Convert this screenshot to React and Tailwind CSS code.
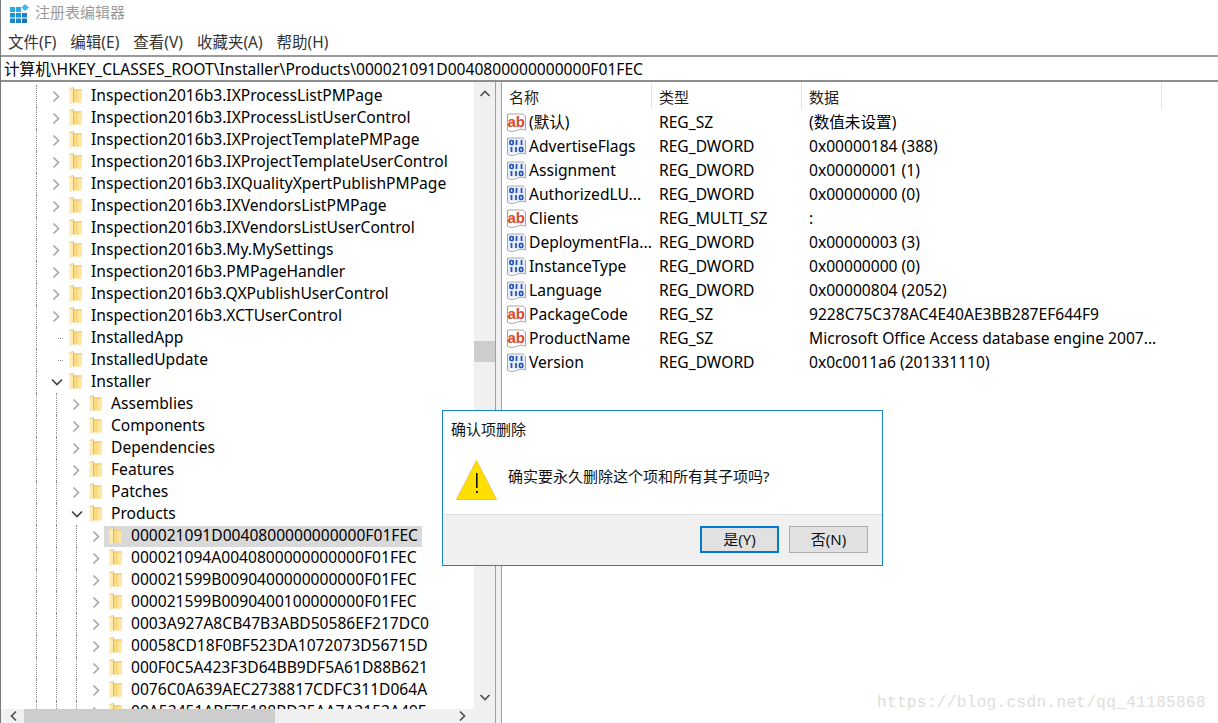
import React from "react";

function Folder() {
  return (
    <svg width="13" height="18" viewBox="0 0 13 18" className="shrink-0">
      <path d="M4 2.5 H12.5 V15.5 H4 Z" fill="#fbd97e" />
      <path d="M9 2.5 H12.5 V15.5 H9 Z" fill="#fde6a0" />
      <path d="M4 2.5 H12.5 V3.5 H4 Z" fill="#eec35f" />
      <path d="M0.5 1.5 L4 0.5 V15.5 L0.5 17.5 Z" fill="#fdeab2" />
      <path d="M4 0.5 H5 V15.5 H4 Z" fill="#e6ba52" />
      <path d="M0.5 1.5 L4 0.5" stroke="#e6ba52" strokeWidth="0.7" fill="none" />
    </svg>
  );
}

function ChevR() {
  return (
    <svg width="9" height="13" viewBox="0 0 9 13" className="shrink-0">
      <path d="M1.5 1.5 L6.5 6.5 L1.5 11.5" fill="none" stroke="#a6a6a6" strokeWidth="1.6" />
    </svg>
  );
}
function ChevD() {
  return (
    <svg width="12" height="9" viewBox="0 0 12 9" className="shrink-0">
      <path d="M1 1.5 L6 6.5 L11 1.5" fill="none" stroke="#404040" strokeWidth="1.6" />
    </svg>
  );
}

function Guide() {
  return <div className="w-5 h-full shrink-0 border-l border-dotted border-[#8a8a8a]" />;
}

function TreeRow({ depth, kind, text, selected }) {
  return (
    <div className="flex items-center h-[22px] pl-[35px] shrink-0 whitespace-nowrap">
      <Guide />
      {depth > 0 && <Guide />}
      {depth > 1 && <Guide />}
      <div className="w-[13px] h-full shrink-0 relative flex items-center">
        <div className="flex items-center justify-center w-[13px] h-full -ml-[6px]">
          {kind === "r" && <ChevR />}
          {kind === "d" && <ChevD />}
          {kind === "n" && <div className="w-[8px] ml-[8px] border-t border-dotted border-[#8a8a8a]" />}
        </div>
      </div>
      <div className={selected ? "flex items-center h-[21px] bg-[#d9d9d9] -ml-[5px] pl-[5px] pr-1" : "flex items-center h-[22px]"}>
        <Folder />
        <span className="ml-[9px] text-[15.6px] text-[#000]">{text}</span>
      </div>
    </div>
  );
}

const tree = [
  [0, "r", "Inspection2016b3.IXProcessListPMPage"],
  [0, "r", "Inspection2016b3.IXProcessListUserControl"],
  [0, "r", "Inspection2016b3.IXProjectTemplatePMPage"],
  [0, "r", "Inspection2016b3.IXProjectTemplateUserControl"],
  [0, "r", "Inspection2016b3.IXQualityXpertPublishPMPage"],
  [0, "r", "Inspection2016b3.IXVendorsListPMPage"],
  [0, "r", "Inspection2016b3.IXVendorsListUserControl"],
  [0, "r", "Inspection2016b3.My.MySettings"],
  [0, "r", "Inspection2016b3.PMPageHandler"],
  [0, "r", "Inspection2016b3.QXPublishUserControl"],
  [0, "r", "Inspection2016b3.XCTUserControl"],
  [0, "n", "InstalledApp"],
  [0, "n", "InstalledUpdate"],
  [0, "d", "Installer"],
  [1, "r", "Assemblies"],
  [1, "r", "Components"],
  [1, "r", "Dependencies"],
  [1, "r", "Features"],
  [1, "r", "Patches"],
  [1, "d", "Products"],
  [2, "r", "000021091D0040800000000000F01FEC", true],
  [2, "r", "000021094A0040800000000000F01FEC"],
  [2, "r", "000021599B0090400000000000F01FEC"],
  [2, "r", "000021599B0090400100000000F01FEC"],
  [2, "r", "0003A927A8CB47B3ABD50586EF217DC0"],
  [2, "r", "00058CD18F0BF523DA1072073D56715D"],
  [2, "r", "000F0C5A423F3D64BB9DF5A61D88B621"],
  [2, "r", "0076C0A639AEC2738817CDFC311D064A"],
  [2, "r", "00A53451ABF75188BD35AA7A3153A49E"],
];

const vals = [
  ["s", "(默认)", "REG_SZ", "(数值未设置)"],
  ["b", "AdvertiseFlags", "REG_DWORD", "0x00000184 (388)"],
  ["b", "Assignment", "REG_DWORD", "0x00000001 (1)"],
  ["b", "AuthorizedLU...", "REG_DWORD", "0x00000000 (0)"],
  ["s", "Clients", "REG_MULTI_SZ", ":"],
  ["b", "DeploymentFla...", "REG_DWORD", "0x00000003 (3)"],
  ["b", "InstanceType", "REG_DWORD", "0x00000000 (0)"],
  ["b", "Language", "REG_DWORD", "0x00000804 (2052)"],
  ["s", "PackageCode", "REG_SZ", "9228C75C378AC4E40AE3BB287EF644F9"],
  ["s", "ProductName", "REG_SZ", "Microsoft Office Access database engine 2007..."],
  ["b", "Version", "REG_DWORD", "0x0c0011a6 (201331110)"],
];

function Page({ children }) {
  return (
    <svg width="21" height="20" viewBox="0 0 21 20" className="shrink-0">
      <path d="M1.5 1 H17 L19.5 3 V17 Q15 15 10.5 17.5 Q6 19.5 1.5 17.5 Z" fill="#fff" stroke="#a8a8a8" />
      {children}
    </svg>
  );
}

function IconS() {
  return (
    <Page>
      <text x="10.3" y="13.5" textAnchor="middle" fontSize="15" fontWeight="700" fontFamily="Liberation Sans, sans-serif" fill="#d8492a">ab</text>
    </Page>
  );
}
function IconB() {
  return (
    <Page>
      <rect x="2" y="2" width="17" height="14" fill="#e4ecf9" />
      <g fill="none" stroke="#2450b4" strokeWidth="1.7">
        <rect x="4" y="3.5" width="3.2" height="4" rx="1.2" />
        <path d="M10.5 3 V8 M15.5 3 V8" />
        <path d="M5.5 10 V15 M10 10 V15" />
        <rect x="13.5" y="10.5" width="3.2" height="4" rx="1.2" />
      </g>
    </Page>
  );
}

function Triangle() {
  return (
    <svg width="42" height="42" viewBox="0 0 42 42" className="shrink-0">
      <path d="M20.5 1.5 L40.5 40.5 H0.5 Z" fill="#fedf00" stroke="#f5c242" strokeWidth="1" strokeLinejoin="round" />
      <rect x="20" y="14" width="1.6" height="15" fill="#111" />
      <rect x="20" y="32" width="1.8" height="2" fill="#111" />
    </svg>
  );
}

function Logo() {
  return (
    <svg width="19" height="19" viewBox="0 0 19 19" className="shrink-0">
      <rect x="0" y="3" width="5" height="5" fill="#29abe2" />
      <rect x="6" y="3" width="5" height="5" fill="#29abe2" />
      <rect x="0" y="9" width="5" height="4.5" fill="#1c93d6" />
      <rect x="6" y="9" width="5" height="4.5" fill="#1c93d6" />
      <rect x="12" y="9" width="5" height="4.5" fill="#1e7fc8" />
      <rect x="0" y="14.5" width="5" height="4.5" fill="#1785c8" />
      <rect x="6" y="14.5" width="5" height="4.5" fill="#1785c8" />
      <rect x="12" y="14.5" width="5" height="4.5" fill="#1475bd" />
      <path d="M15 0 L19 3.5 L15 7 L11.5 3.5 Z" fill="#49b6e8" />
    </svg>
  );
}

function Arrow({ d }) {
  return (
    <svg width="12" height="12" viewBox="0 0 12 12" className="shrink-0">
      <path d={d} fill="none" stroke="#505050" strokeWidth="1.7" />
    </svg>
  );
}

export default function App() {
  return (
    <div
      className="relative w-[1218px] h-[723px] overflow-hidden bg-white flex flex-col text-[15.6px] text-black border-l border-[#7a7a7a]"
      style={{ fontFamily: '"Noto Sans", "Noto Sans CJK SC", sans-serif' }}
    >
      <div className="h-[27px] shrink-0 flex items-center pl-[9px] gap-[6px]">
        <Logo />
        <span className="text-[15px] text-[#9a9a9a] -mt-[3px]">注册表编辑器</span>
      </div>
      <div className="h-7 shrink-0 flex items-center pl-[7px] pt-[3px] gap-[14px] text-[15.5px] text-[#333]">
        <span>文件(F)</span>
        <span>编辑(E)</span>
        <span>查看(V)</span>
        <span>收藏夹(A)</span>
        <span>帮助(H)</span>
      </div>
      <div className="h-[27px] shrink-0 flex items-center pl-[3px] pt-[2px] border-y-2 border-[#9a9a9a] border-b-[#8e8e8e] text-[15.6px] bg-white">
        计算机\HKEY_CLASSES_ROOT\Installer\Products\000021091D0040800000000000F01FEC
      </div>
      <div className="flex-1 flex min-h-0">
        <div className="w-[494px] shrink-0 flex flex-col">
          <div className="flex-1 flex min-h-0">
            <div className="w-[473px] shrink-0 overflow-hidden flex flex-col pt-[3px]">
              {tree.map((r, i) => (
                <TreeRow key={i} depth={r[0]} kind={r[1]} text={r[2]} selected={r[3]} />
              ))}
            </div>
            <div className="w-[21px] shrink-0 bg-[#f0f0f0] flex flex-col items-center pt-[6px] pb-[6px] justify-between relative">
              <Arrow d="M1.5 8 L6 3.5 L10.5 8" />
              <div className="absolute left-0 top-[259px] w-full h-[21px] bg-[#cdcdcd]" />
              <Arrow d="M1.5 4 L6 8.5 L10.5 4" />
            </div>
          </div>
          <div className="h-[14px] shrink-0 bg-[#f0f0f0] flex items-center justify-between pl-[7px] pr-[27px] relative">
            <Arrow d="M8 1.5 L3.5 6 L8 10.5" />
            <div className="absolute left-[23px] top-0 h-full w-[251px] bg-[#cdcdcd]" />
            <Arrow d="M4 1.5 L8.5 6 L4 10.5" />
          </div>
        </div>
        <div className="w-[7px] shrink-0 bg-[#f0f0f0] border-x border-[#a0a0a0]" />
        <div className="flex-1 flex flex-col min-w-0">
          <div className="h-[28px] shrink-0 flex items-center text-[15px] text-[#222]">
            <div className="w-[150px] pl-[7px] border-r border-[#e5e5e5] h-full flex items-center pt-[3px]">名称</div>
            <div className="w-[150px] pl-[7px] border-r border-[#e5e5e5] h-full flex items-center pt-[3px]">类型</div>
            <div className="w-[360px] pl-[7px] border-r border-[#e5e5e5] h-full flex items-center pt-[3px]">数据</div>
          </div>
          {vals.map((v, i) => (
            <div key={i} className="h-6 shrink-0 flex items-center whitespace-nowrap text-[15.6px] translate-y-[1px]">
              <div className="w-[150px] flex items-center pl-[4px] gap-[1px]">
                {v[0] === "s" ? <IconS /> : <IconB />}
                <span className="ml-[1px]">{v[1]}</span>
              </div>
              <div className="w-[150px] pl-[7px]">{v[2]}</div>
              <div className="pl-[7px]">{v[3]}</div>
            </div>
          ))}
        </div>
      </div>

      <div className="absolute left-[441px] top-[410px] w-[441px] h-[156px] border border-[#1883d7] bg-white flex flex-col">
        <div className="h-[36px] shrink-0 flex items-center pl-[8px] text-[15px] text-[#111]">确认项删除</div>
        <div className="flex-1 flex items-center pl-[13px] gap-[10px] pb-[2px]">
          <Triangle />
          <span className="text-[15px] text-[#111] -mt-[6px]">确实要永久删除这个项和所有其子项吗?</span>
        </div>
        <div className="h-[51px] shrink-0 bg-[#f0f0f0] border-t border-[#dfdfdf] flex items-center justify-end gap-[10px] pr-[14px] pb-[1px]">
          <button className="w-[79px] h-[27px] bg-[#e1e1e1] border-2 border-[#0078d7] text-[15px] text-[#111] flex items-center justify-center">是(Y)</button>
          <button className="w-[79px] h-[27px] bg-[#e1e1e1] border border-[#adadad] text-[15px] text-[#111] flex items-center justify-center">否(N)</button>
        </div>
      </div>

      <div
        className="absolute right-[12px] top-[693px] text-[16px] leading-[20px] text-[#dededa] tracking-[0.37px]"
        style={{ fontFamily: '"Liberation Mono", monospace' }}
      >
        https://blog.csdn.net/qq_41185868
      </div>
    </div>
  );
}
